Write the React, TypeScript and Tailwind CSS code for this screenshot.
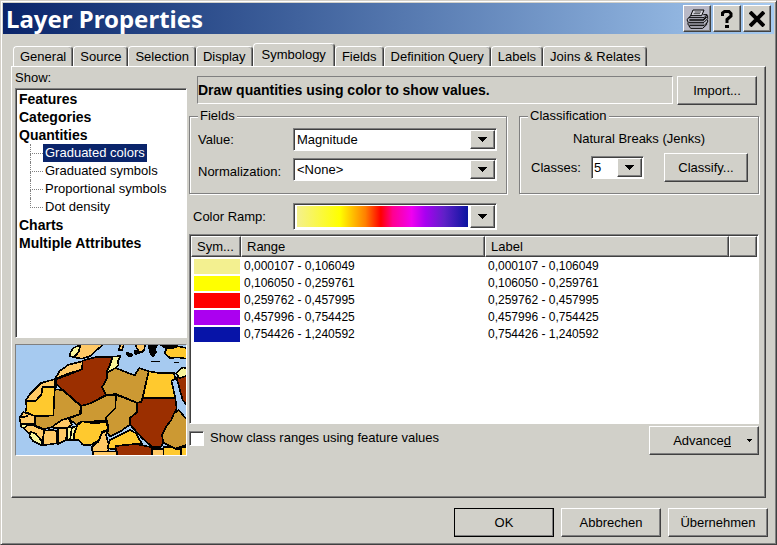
import React, { useState } from "react";
import clsx from "clsx";

const RAISED =
    "border border-t-white border-l-white border-b-[#404040] border-r-[#404040] shadow-[inset_-1px_-1px_0_#808080]";
const SUNKEN =
    "border border-t-[#808080] border-l-[#808080] border-b-white border-r-white shadow-[inset_1px_1px_0_#404040]";

const TABS = [
    "General",
    "Source",
    "Selection",
    "Display",
    "Symbology",
    "Fields",
    "Definition Query",
    "Labels",
    "Joins & Relates",
];

const CLASSES = [
    { swatch: "bg-[#f3f090]", range: "0,000107 - 0,106049" },
    { swatch: "bg-[#ffff00]", range: "0,106050 - 0,259761" },
    { swatch: "bg-[#ff0000]", range: "0,259762 - 0,457995" },
    { swatch: "bg-[#ab00f0]", range: "0,457996 - 0,754425" },
    { swatch: "bg-[#0714a8]", range: "0,754426 - 1,240592" },
];

const QUANTITIES = ["Graduated colors", "Graduated symbols", "Proportional symbols", "Dot density"];

function PushButton({ className, children }: { className?: string; children: React.ReactNode }) {
    return (
        <button type="button" className={clsx("h-[29px] bg-[#d1d0c9]", RAISED, className)}>
            {children}
        </button>
    );
}

type ComboProps = {
    id: string;
    options: string[];
    className?: string;
    selectClass?: string;
    children?: React.ReactNode;
};

function Combo({ id, options, className, selectClass, children }: ComboProps) {
    return (
        <div className={clsx("relative flex bg-white p-px", SUNKEN, className)}>
            <select id={id} className={clsx("w-full appearance-none bg-transparent outline-none", selectClass)}>
                {options.map((option) => (
                    <option key={option}>{option}</option>
                ))}
            </select>
            {children}
            <span
                className={clsx(
                    "pointer-events-none absolute inset-y-px right-px flex w-[25px] items-center justify-center bg-[#d1d0c9]",
                    RAISED
                )}
            >
                <svg width="9" height="5" viewBox="0 0 9 5" shapeRendering="crispEdges">
                    <path d="M0 0H9L4.5 5Z" />
                </svg>
            </span>
        </div>
    );
}

function TitleBar() {
    const button =
        "flex h-[27px] w-7 items-center justify-center border border-t-white border-l-white border-b-[#404040] border-r-[#404040] shadow-[inset_-1px_-1px_0_#808080]";

    return (
        <header className="flex h-[31px] items-center bg-linear-to-r from-[#0a246a] to-[#a6caf0] px-[3px]">
            <h1 className="flex-1 font-['Noto_Sans'] text-2xl leading-none font-bold text-white">Layer Properties</h1>
            <button type="button" aria-label="Print" className={clsx(button, "mr-0.5 bg-[#b9b9c6]")}>
                <svg width="23" height="22" viewBox="30 21 69 66" fill="none" stroke="#000" strokeWidth="3">
                    <path d="M51 27H84L77 44H44Z" fill="#d4d4dc" />
                    <path d="M56 33H75M53 38H72" strokeWidth="2" />
                    <path d="M46 43L38 50H84L93 41H82" />
                    <path d="M38 50L34 55V60L38 64H84L95 53V44L91 43" />
                    <path d="M40 57H82L92 47" strokeWidth="4" />
                    <path d="M36 64V71L40 74H84L95 63V56" />
                    <path d="M40 69H84" strokeWidth="2" />
                    <path d="M39 75L44 82H80L92 71V65" />
                </svg>
            </button>
            <button type="button" aria-label="Help" className={clsx(button, "mr-0.5 bg-[#d1d0c9]")}>
                <svg width="14" height="20" viewBox="0 0 14 20" fill="none" stroke="#000" strokeWidth="3">
                    <path d="M2.5 7V4L4.500 2.500H9L11 4.500V7L7 10.500V14M5 17.500H9" />
                </svg>
            </button>
            <button type="button" aria-label="Close" className={clsx(button, "bg-[#d1d0c9]")}>
                <svg width="16" height="16" viewBox="0 0 16 16" fill="none" stroke="#000" strokeWidth="4">
                    <path d="M1 1L15 15M15 1L1 15" />
                </svg>
            </button>
        </header>
    );
}

function AfricaMap() {
    return (
        <svg
            className="h-[112px] w-full border border-t-[#808080] border-l-[#808080] border-b-white border-r-white bg-[#a6caf0]"
            viewBox="48 45 510 330"
            preserveAspectRatio="xMidYMid slice"
            stroke="#000"
            strokeWidth="5"
            strokeLinejoin="round"
            shapeRendering="crispEdges"
        >
            {/* southern Europe and Turkey */}
            <path fill="#ffc966" d="M236 42L228 66L222 82L246 86L272 78L290 60L312 42Z" />
            <path fill="#f8f49a" d="M220 54L242 44L236 66L222 82L208 78L212 66Z" />
            <path fill="#ffc966" d="M362 42H372L366 60H356ZM406 42H436L432 62L418 66L410 54Z" />
            <path fill="#ffc92e" d="M560 54L530 48L500 54L494 70L510 84L532 82L560 86Z" />
            <path d="M380 68L398 74L394 80L382 76ZM404 62L428 66L406 72ZM446 46H472L464 56L468 66L458 80L450 68ZM482 44H530V52L500 56L490 50Z" />
            <path fill="none" d="M454 94H480M522 97H538" />
            {/* north west */}
            <path fill="#ffc966" d="M248 94L206 104L180 122L164 148L140 154L122 160L92 190L76 212H108L124 192L128 170H164V148L196 134L246 118Z" />
            <path fill="#ffc92e" d="M168 170H128L124 194L108 212H76L80 230L76 246L104 258L160 256L164 180Z" />
            <path fill="#9b2f00" d="M248 92L284 82L338 80L330 104L320 126L322 144L308 168L318 194L276 218L244 228L168 162V148L206 134L246 118Z" />
            <path fill="#f8f49a" d="M338 80L362 78L352 96L356 104L330 130L320 126L330 104Z" />
            <path fill="#cc9933" d="M322 128L346 114L372 124L404 136L418 114L446 124L440 150L428 200L424 216L410 218L348 192L318 196L306 172L322 144Z" />
            <path fill="#ffc92e" d="M446 124L486 130L522 128L526 148L514 152L526 204H428L440 150Z" />
            {/* Sahel */}
            <path fill="#cc9933" d="M168 178L188 180L242 228L240 252L206 264L186 270L160 290L132 298L104 286V260L160 256L164 180Z" />
            <path fill="#cc9933" d="M244 228L276 218L318 196L346 194V234L326 260L316 272L282 274L244 274L230 284L206 266L242 252Z" />
            <path fill="#cc9933" d="M348 194L410 218L412 246L392 262L390 284L364 302L330 320L318 300L326 292L318 262L346 234Z" />
            <path fill="#9b2f00" d="M428 204H526L530 236L514 270L498 290L486 316L494 330L484 350L458 352L428 326L410 306L390 284V264L412 246L410 218L424 216Z" />
            <path fill="#cc9933" d="M536 240L560 268V344L526 356L490 338L486 316L498 290L514 270L522 250Z" />
            <path fill="#9b2f00" d="M530 144L560 138V226L548 210Z" />
            <path fill="#f8f49a" d="M528 130L548 112L560 116V138L538 144Z" />
            {/* west coast */}
            <path fill="#ffc966" d="M70 246L104 258V282L62 280L58 264ZM62 286H100L132 300L128 338L104 314L84 308ZM132 302L160 300L172 304L170 340L128 346ZM174 294H202L198 330L174 342ZM160 288L186 270L206 264L216 284L202 294H162Z" />
            <path fill="#f8f49a" d="M62 280L84 284L76 292H64ZM92 306L106 310L126 334V346L100 334L88 318ZM200 292H216L232 288L220 316V330H202Z" />
            <path fill="none" d="M216 292L210 330M64 262L84 258" />
            <path fill="#ffc92e" d="M232 286L246 274L282 280L320 276L324 298L306 306L296 332L270 346L248 344L236 330H222V314Z" />
            {/* central Africa */}
            <path fill="#ffc966" d="M326 300L318 314L328 350L322 372H278L276 350L296 334L306 308Z" />
            <path fill="#ffc92e" d="M390 300L408 310L426 342L356 348L340 358L322 354L330 330Z" />
            <path fill="#9b2f00" d="M346 348L408 342L456 352V380H352Z" />
            <path fill="#ffc966" d="M278 364H350V380H278ZM456 356H490V380H456Z" />
            <path fill="#ffc92e" d="M490 350H516L524 356H542V380H490ZM544 350H560V380H544Z" />
        </svg>
    );
}

function ShowTree() {
    return (
        <ul className={clsx("h-[250px] bg-white pt-px pl-[3px] text-sm leading-[18px] font-bold", SUNKEN)}>
            <li>Features</li>
            <li>Categories</li>
            <li>
                Quantities
                <ul className="pl-[11px] text-[13px] font-normal">
                    {QUANTITIES.map((item, i) => (
                        <li key={item} className="flex">
                            <span className="flex w-[13px] flex-col">
                                <span className="h-[10px] border-b border-l border-dotted border-[#808080]" />
                                {i < QUANTITIES.length - 1 && (
                                    <span className="flex-1 border-l border-dotted border-[#808080]" />
                                )}
                            </span>
                            <span className={clsx("px-0.5", i === 0 && "bg-[#0a246a] text-white")}>{item}</span>
                        </li>
                    ))}
                </ul>
            </li>
            <li>Charts</li>
            <li>Multiple Attributes</li>
        </ul>
    );
}

function ClassTable() {
    const head = clsx("h-[21px] bg-[#d1d0c9] pl-[5px] text-left font-normal", RAISED);

    return (
        <div className={clsx("h-[190px] bg-white p-px", SUNKEN)}>
            <table className="w-full table-fixed border-separate border-spacing-0">
                <thead>
                    <tr>
                        <th className={clsx(head, "w-[50px]")}>Sym...</th>
                        <th className={head}>Range</th>
                        <th className={head}>Label</th>
                        <th className={clsx(head, "w-7")} />
                    </tr>
                </thead>
                <tbody className="text-xs leading-[17px] before:block before:h-px">
                    {CLASSES.map(({ swatch, range }) => (
                        <tr key={range}>
                            <td className="h-[17px] pl-[3px]">
                                <div className={clsx("h-[15px] w-[46px]", swatch)} />
                            </td>
                            <td className="pl-[3px]">{range}</td>
                            <td className="pl-[3px]">{range}</td>
                            <td />
                        </tr>
                    ))}
                </tbody>
            </table>
        </div>
    );
}

function Group({ title, className, children }: { title: string; className?: string; children: React.ReactNode }) {
    return (
        <fieldset
            className={clsx(
                "h-[86px] border border-[#808080] shadow-[1px_1px_0_#fff,inset_1px_1px_0_#fff]",
                className
            )}
        >
            <legend className="ml-2 bg-[#d1d0c9] px-0.5 leading-4">{title}</legend>
            {children}
        </fieldset>
    );
}

export default function App() {
    const [tab, setTab] = useState("Symbology");

    return (
        <main className="flex min-h-screen flex-col border border-[#d4d0c8] border-r-[#404040] border-b-[#404040] bg-[#d1d0c9] p-0.5 font-['Liberation_Sans',Arial,sans-serif] text-[13px] leading-4 text-black shadow-[inset_1px_1px_0_#fff,inset_-1px_-1px_0_#808080]">
            <TitleBar />

            <div className="flex flex-1 flex-col px-2 pt-[9px]">
                <nav role="tablist" className="flex items-end pl-0.5">
                    {TABS.map((name) => (
                        <button
                            key={name}
                            type="button"
                            role="tab"
                            aria-selected={tab === name}
                            onClick={() => setTab(name)}
                            className={clsx(
                                "rounded-t-sm border-t border-l border-r border-t-white border-l-white border-r-[#404040] whitespace-nowrap shadow-[inset_-1px_0_0_#808080]",
                                tab === name ? "-mb-px h-6 bg-[#d1d0c9] px-2 pb-0.5" : "h-5 px-1.5"
                            )}
                        >
                            {name}
                        </button>
                    ))}
                </nav>

                <section className={clsx("flex h-[432px] gap-0.5 pt-[3px] pr-1.5 pl-[3px]", RAISED)}>
                    <div className="w-[172px]">
                        <p className="h-[18px]">Show:</p>
                        <ShowTree />
                        <div className="mt-1.5">
                            <AfricaMap />
                        </div>
                    </div>

                    <div className="flex-1 pt-1.5">
                        <div className="flex gap-1 pr-0.5 pl-2">
                            <h2 className="flex h-7 flex-1 items-center border border-t-[#808080] border-l-[#808080] border-b-white border-r-white text-sm font-bold">
                                Draw quantities using color to show values.
                            </h2>
                            <PushButton className="w-20">Import...</PushButton>
                        </div>

                        <div className="mt-[3px] flex gap-3">
                            <div className="flex-1">
                                <Group title="Fields">
                                    <div className="flex flex-col gap-[7px] pt-1 pr-[9px] pl-2">
                                        <div className="flex items-center">
                                            <label htmlFor="value" className="w-[95px]">
                                                Value:
                                            </label>
                                            <Combo
                                                id="value"
                                                options={["Magnitude"]}
                                                className="h-[23px] flex-1"
                                                selectClass="pl-0.5"
                                            />
                                        </div>
                                        <div className="flex items-center">
                                            <label htmlFor="normalization" className="w-[95px] pt-1">
                                                Normalization:
                                            </label>
                                            <Combo
                                                id="normalization"
                                                options={["<None>"]}
                                                className="h-[23px] flex-1"
                                                selectClass="pl-0.5"
                                            />
                                        </div>
                                    </div>
                                </Group>
                                <div className="mt-[9px] flex items-center pr-2.5 pl-1">
                                    <label htmlFor="ramp" className="w-[100px]">
                                        Color Ramp:
                                    </label>
                                    <Combo id="ramp" options={[""]} className="h-[27px] flex-1" selectClass="absolute inset-0">
                                        <span className="pointer-events-none my-px mr-[27px] ml-0.5 flex-1 bg-[linear-gradient(90deg,#f4f08e_0%,#ffff00_25%,#ff8000_40%,#ff0000_49%,#ff0090_56%,#f000f0_67%,#a800f0_75%,#6020c8_86%,#0a14a0_100%)]" />
                                    </Combo>
                                </div>
                            </div>

                            <Group title="Classification" className="w-60">
                                <p className="mt-[7px] text-center">Natural Breaks (Jenks)</p>
                                <div className="mt-1.5 flex items-center pr-2.5 pl-[11px]">
                                    <label htmlFor="classes" className="w-[60px]">
                                        Classes:
                                    </label>
                                    <Combo id="classes" options={["5"]} className="h-[23px] w-[53px]" selectClass="pl-px" />
                                    <PushButton className="ml-auto w-[84px]">Classify...</PushButton>
                                </div>
                            </Group>
                        </div>

                        <div className="mt-1">
                            <ClassTable />
                        </div>

                        <div className="mt-0.5 flex items-start justify-between">
                            <label className="flex items-center gap-1.5 pt-1">
                                <input
                                    type="checkbox"
                                    className={clsx("size-[15px] appearance-none bg-white checked:bg-[#0a246a]", SUNKEN)}
                                />
                                Show class ranges using feature values
                            </label>
                            <PushButton className="flex w-[110px] items-center justify-end gap-4 pr-1.5">
                                <span>
                                    Advance<u>d</u>
                                </span>
                                <svg width="5" height="3" viewBox="0 0 5 3" shapeRendering="crispEdges">
                                    <path d="M0 0H5L2.5 3Z" />
                                </svg>
                            </PushButton>
                        </div>
                    </div>
                </section>

                <footer className="-mr-0.5 mt-2.5 flex justify-end gap-[7px]">
                    <PushButton className="w-[100px] outline outline-black -outline-offset-1">OK</PushButton>
                    <PushButton className="w-[100px]">Abbrechen</PushButton>
                    <PushButton className="w-[100px]">Übernehmen</PushButton>
                </footer>
            </div>
        </main>
    );
}
